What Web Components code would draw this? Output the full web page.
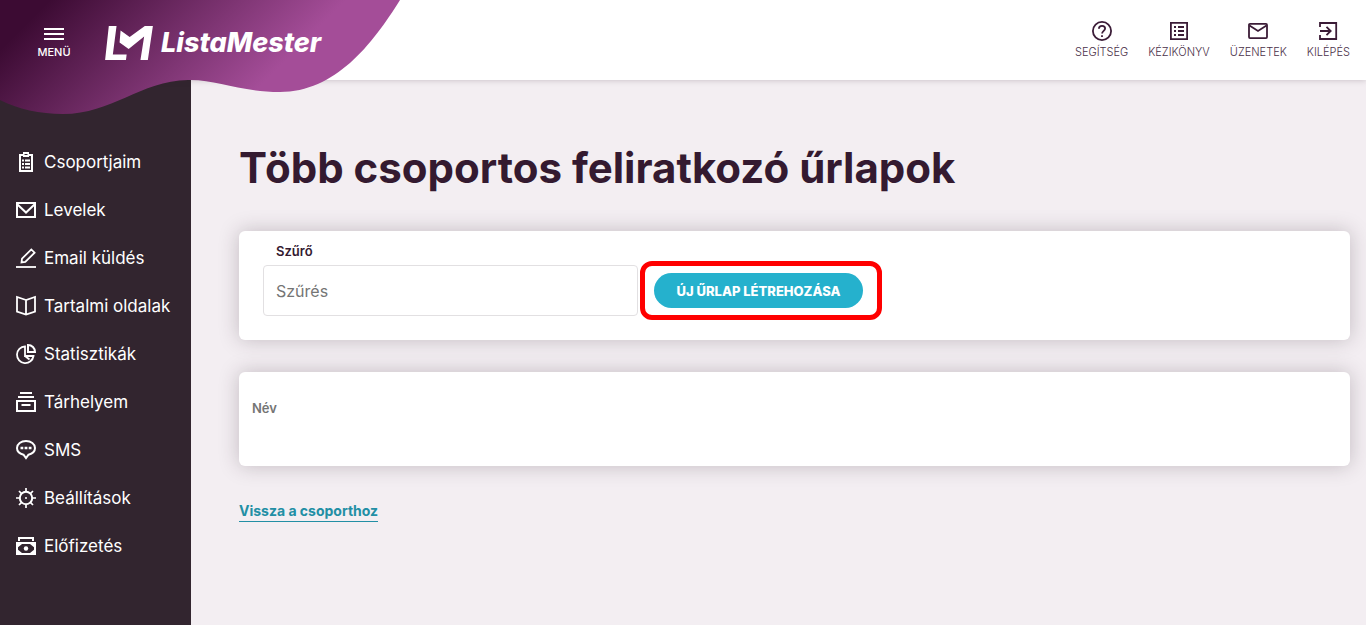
<!DOCTYPE html>
<html lang="hu">
<head>
<meta charset="utf-8">
<meta name="viewport" content="width=device-width, initial-scale=1">
<title>ListaMester – Több csoportos feliratkozó űrlapok</title>
<style>
body { margin: 0; background: #f3eef2; color: #341a30; font-family: Inter, "Open Sans", sans-serif; }
</style>
</head>
<body>
<lm-app></lm-app>
<script>
const define = (name, html, setup) => {
  const template = document.createElement('template');
  template.innerHTML = html;
  customElements.define(name, class extends HTMLElement {
    connectedCallback() {
      if (this.shadowRoot) return;
      const root = this.attachShadow({ mode: 'open' });
      root.append(template.content.cloneNode(true));
      if (setup) setup(this, root);
    }
  });
};

/* 20 x 20 line icons, drawn with the current colour */
const ICONS = {
  help: '<circle cx="10" cy="10" r="9.1"/><path d="M6.9 7.8C7 5.9 8.300 4.900 10 4.900s3.100 1.100 3.100 2.700c0 2.300-3 2.400-3 5"/><path d="M10 14.200v1.800"/>',
  manual: '<path d="M1.900 1.900h16.200v16.200H1.900z"/><path d="M5 6h2m2 0h6M5 10h2m2 0h6M5 14h2m2 0h6" stroke-width="2"/>',
  mail: '<rect x="1" y="2.900" width="18" height="14.200" rx="1"/><path d="M1.500 4.500 10 10l8.500-5.500"/>',
  exit: '<path d="M2 6V2h16.200v16H2v-4M2 10h10M8.500 5.800l4.200 4.200-4.200 4.200"/>',
  clipboard: '<path d="M4 3h12v16H4z" stroke-width="2"/><path d="M7 0h6v5H7z" fill="currentColor" stroke="none"/><path d="M8.500 2.500h3" stroke="#32252f" stroke-width="1"/><path d="M6 8.500h2m1 0h5M6 12h2m1 0h5M6 15.500h2m1 0h5" stroke-width="2"/>',
  letter: '<path d="M1 3h18v14H1z" stroke-width="2"/><path d="m1 4 9 8.500L19 4" stroke-width="2"/>',
  pen: '<path d="M0 19h20"/><path d="M5.500 14.500 6 10.700 15.300 1.400l3.300 3.300-9.300 9.300z"/>',
  book: '<path d="M10 4 1 1v14.500l9 3 9-3V1zM10 4v14.500" />',
  pie: '<path d="M9 2.500A8.300 8.300 0 1 0 17.500 12H9z"/><path d="M12 1v7h7a7 7 0 0 0-7-7z" stroke-width="2"/><path d="m9 12 4.500 3.500"/>',
  archive: '<path d="M4 1h12M2 5h16M1 9h18v10H1zM5.500 13h9" stroke-width="2"/>',
  chat: '<path d="M10 1c-5 0-9 2.800-9 7 0 3.500 3 5.800 6.500 6.700L10 18l2.500-3.300C16 13.800 19 11.500 19 8c0-4.200-4-7-9-7z" stroke-width="2"/><path d="M4.500 8h2.800M8.600 8h2.800M12.700 8h2.800" stroke-width="2.700"/>',
  gear: '<circle cx="10" cy="10" r="6.200" stroke-width="2"/><path d="M10 0v4M10 16v4M0 10h4M16 10h4M3 3l2.600 2.600M14.400 14.400 17 17M17 3l-2.600 2.600M5.600 14.400 3 17M9 10h2" stroke-width="1.700"/>',
  money: '<path d="M3 5V2h14v3" stroke-width="2"/><path d="M1 7h18v11H1z" stroke-width="2"/><path d="M2 8h4l-4 3.200zM18 8h-4l4 3.200zM2 17h4l-4-3.200zM18 17h-4l4-3.200z" fill="currentColor" stroke="none"/><circle cx="10" cy="12.500" r="2.200" fill="currentColor" stroke="none"/>'
};

define('lm-icon', `
<style>
  :host { display: block; width: 20px; height: 20px; flex: none; }
  svg { display: block; width: 100%; height: 100%; overflow: visible; }
</style>
<svg viewBox="0 0 20 20" fill="none" stroke="currentColor" stroke-width="1.800" aria-hidden="true"></svg>`,
(host, root) => { root.querySelector('svg').innerHTML = ICONS[host.getAttribute('name')] || ''; });

define('lm-top-link', `
<style>
  :host { display: block; }
  a { display: flex; flex-direction: column; align-items: center; gap: 2px; color: #3b1c37; text-decoration: none; font-size: 11px; line-height: 18px; }
  span { color: #4a3048; font-weight: 300; }
</style>
<a href="#"><lm-icon></lm-icon><span><slot></slot></span></a>`,
(host, root) => {
  const icon = document.createElement('lm-icon');
  icon.setAttribute('name', host.getAttribute('icon'));
  root.querySelector('lm-icon').replaceWith(icon);
});

define('lm-nav-link', `
<style>
  :host { display: block; }
  a { display: flex; align-items: center; gap: 8px; height: 48px; padding: 0 16px; color: #fff; text-decoration: none; font-size: 17px; line-height: 24px; white-space: nowrap; }
</style>
<a href="#"><lm-icon></lm-icon><span><slot></slot></span></a>`,
(host, root) => {
  const icon = document.createElement('lm-icon');
  icon.setAttribute('name', host.getAttribute('icon'));
  root.querySelector('lm-icon').replaceWith(icon);
});

define('lm-logo', `
<style>
  :host { display: block; }
  a { display: flex; align-items: center; gap: 8px; color: #fff; text-decoration: none; font-size: 27px; line-height: 32px; font-weight: 800; font-style: italic; }
  svg { display: block; width: 48px; height: 34px; }
</style>
<a href="#">
  <svg viewBox="44 33 142 101" fill="currentColor" aria-hidden="true">
    <path d="M55 33h23L67 118h41l-2 16H44z"/>
    <path d="m90 46 27 20 45-33h24l-15 101h-22l11-70-46 37-27-19z"/>
  </svg>
  <span>ListaMester</span>
</a>`);

define('lm-header', `
<style>
  :host { display: block; position: relative; z-index: 1; background: #fff; box-shadow: 0 0 6px rgba(50, 37, 47, .25); }
  .wave { position: absolute; left: 0; top: 0; width: 400px; height: 115px; pointer-events: none; }
  .bar { position: relative; display: flex; align-items: center; justify-content: space-between; height: 80px; padding: 0 16px 0 32px; box-sizing: border-box; }
  .brand { display: flex; align-items: center; gap: 29px; padding-top: 6px; }
  button { display: flex; flex-direction: column; align-items: center; width: 44px; padding: 2px 0 0; border: 0; background: none; color: #fff; font: 500 11px/16px Inter, sans-serif; gap: 4px; }
  button svg { display: block; width: 20px; height: 12px; }
  nav { display: flex; gap: 20px; padding-top: 2px; }
</style>
<svg class="wave" viewBox="0 0 400 115" aria-hidden="true">
  <defs><linearGradient id="g" gradientUnits="userSpaceOnUse" x1="25" y1="25" x2="173" y2="173">
    <stop offset="0" stop-color="#3c0b33"/><stop offset="1" stop-color="#a44d98"/>
  </linearGradient></defs>
  <path fill="url(#g)" d="M0 0H400C372 45 335 92 280 92C240 92 215 79 188 80C140 81 112 114 63 114C40 114 18 109 0 100Z"/>
</svg>
<div class="bar">
  <div class="brand">
    <button type="button">
      <svg viewBox="0 0 20 12" stroke="currentColor" stroke-width="2" aria-hidden="true"><path d="M0 1h20M0 6h20M0 11h20"/></svg>
      <span>MENÜ</span>
    </button>
    <lm-logo></lm-logo>
  </div>
  <nav>
    <lm-top-link icon="help">SEGÍTSÉG</lm-top-link>
    <lm-top-link icon="manual">KÉZIKÖNYV</lm-top-link>
    <lm-top-link icon="mail">ÜZENETEK</lm-top-link>
    <lm-top-link icon="exit">KILÉPÉS</lm-top-link>
  </nav>
</div>`);

define('lm-sidebar', `
<style>
  :host { display: block; background: #32252f; padding: 58px 0 32px; box-sizing: border-box; }
</style>
<nav>
  <lm-nav-link icon="clipboard">Csoportjaim</lm-nav-link>
  <lm-nav-link icon="letter">Levelek</lm-nav-link>
  <lm-nav-link icon="pen">Email küldés</lm-nav-link>
  <lm-nav-link icon="book">Tartalmi oldalak</lm-nav-link>
  <lm-nav-link icon="pie">Statisztikák</lm-nav-link>
  <lm-nav-link icon="archive">Tárhelyem</lm-nav-link>
  <lm-nav-link icon="chat">SMS</lm-nav-link>
  <lm-nav-link icon="gear">Beállítások</lm-nav-link>
  <lm-nav-link icon="money">Előfizetés</lm-nav-link>
</nav>`);

define('lm-card', `
<style>
  :host { display: block; background: #fff; border-radius: 6px; box-shadow: 0 0 20px rgba(50, 37, 47, .25); }
</style>
<slot></slot>`);

define('lm-filter', `
<style>
  :host { display: block; padding: 10px 24px 24px; }
  label { display: block; padding: 0 13px 4px; font-size: 13px; line-height: 20px; font-weight: 600; }
  .row { display: flex; align-items: center; gap: 16px; }
  input { width: 375px; min-width: 0; height: 51px; box-sizing: border-box; padding: 0 12px; border: 1px solid #e2e0e2; border-radius: 4px; background: #fff; color: #341a30; font: 16px/24px Inter, sans-serif; }
  input::placeholder { color: #757575; opacity: 1; }
  .action { position: relative; flex: none; }
  button { display: block; height: 35px; padding: 0 20px; border: 0; border-radius: 18px; background: #25b1cd; color: #fff; font: 800 13px/20px Inter, sans-serif; min-width: 209px; white-space: nowrap; }
  .mark { position: absolute; inset: -12px -19px -12px -14px; border: 5px solid #f00; border-radius: 12px; pointer-events: none; }
</style>
<label for="filter">Szűrő</label>
<div class="row">
  <input id="filter" type="text" placeholder="Szűrés">
  <div class="action"><button type="button">ÚJ ŰRLAP LÉTREHOZÁSA</button><div class="mark"></div></div>
</div>`);

define('lm-form-list', `
<style>
  :host { display: block; padding: 24px 0 44px; }
  table { width: 100%; border-collapse: collapse; }
  th { padding: 2px 13px 4px; color: #757575; font-size: 13px; line-height: 20px; font-weight: 600; text-align: left; }
</style>
<table><thead><tr><th scope="col">Név</th></tr></thead></table>`);

define('lm-app', `
<style>
  :host { display: flex; flex-direction: column; min-height: 100vh; }
  .body { flex: 1; display: grid; grid-template-columns: 191px minmax(0, 1fr); }
  main { padding: 56px 16px 32px 48px; }
  h1 { margin: 0 0 31px; font-size: 42px; line-height: 64px; font-weight: 700; }
  .cards { display: grid; gap: 32px; }
  .back { display: inline-block; margin-top: 34px; border-bottom: 1px solid #228fa5; color: #228fa5; font-size: 14px; line-height: 21px; font-weight: 700; text-decoration: none; }
</style>
<lm-header></lm-header>
<div class="body">
  <lm-sidebar></lm-sidebar>
  <main>
    <h1>Több csoportos feliratkozó űrlapok</h1>
    <div class="cards">
      <lm-card><lm-filter></lm-filter></lm-card>
      <lm-card><lm-form-list></lm-form-list></lm-card>
    </div>
    <a class="back" href="#">Vissza a csoporthoz</a>
  </main>
</div>`);
</script>
</body>
</html>
